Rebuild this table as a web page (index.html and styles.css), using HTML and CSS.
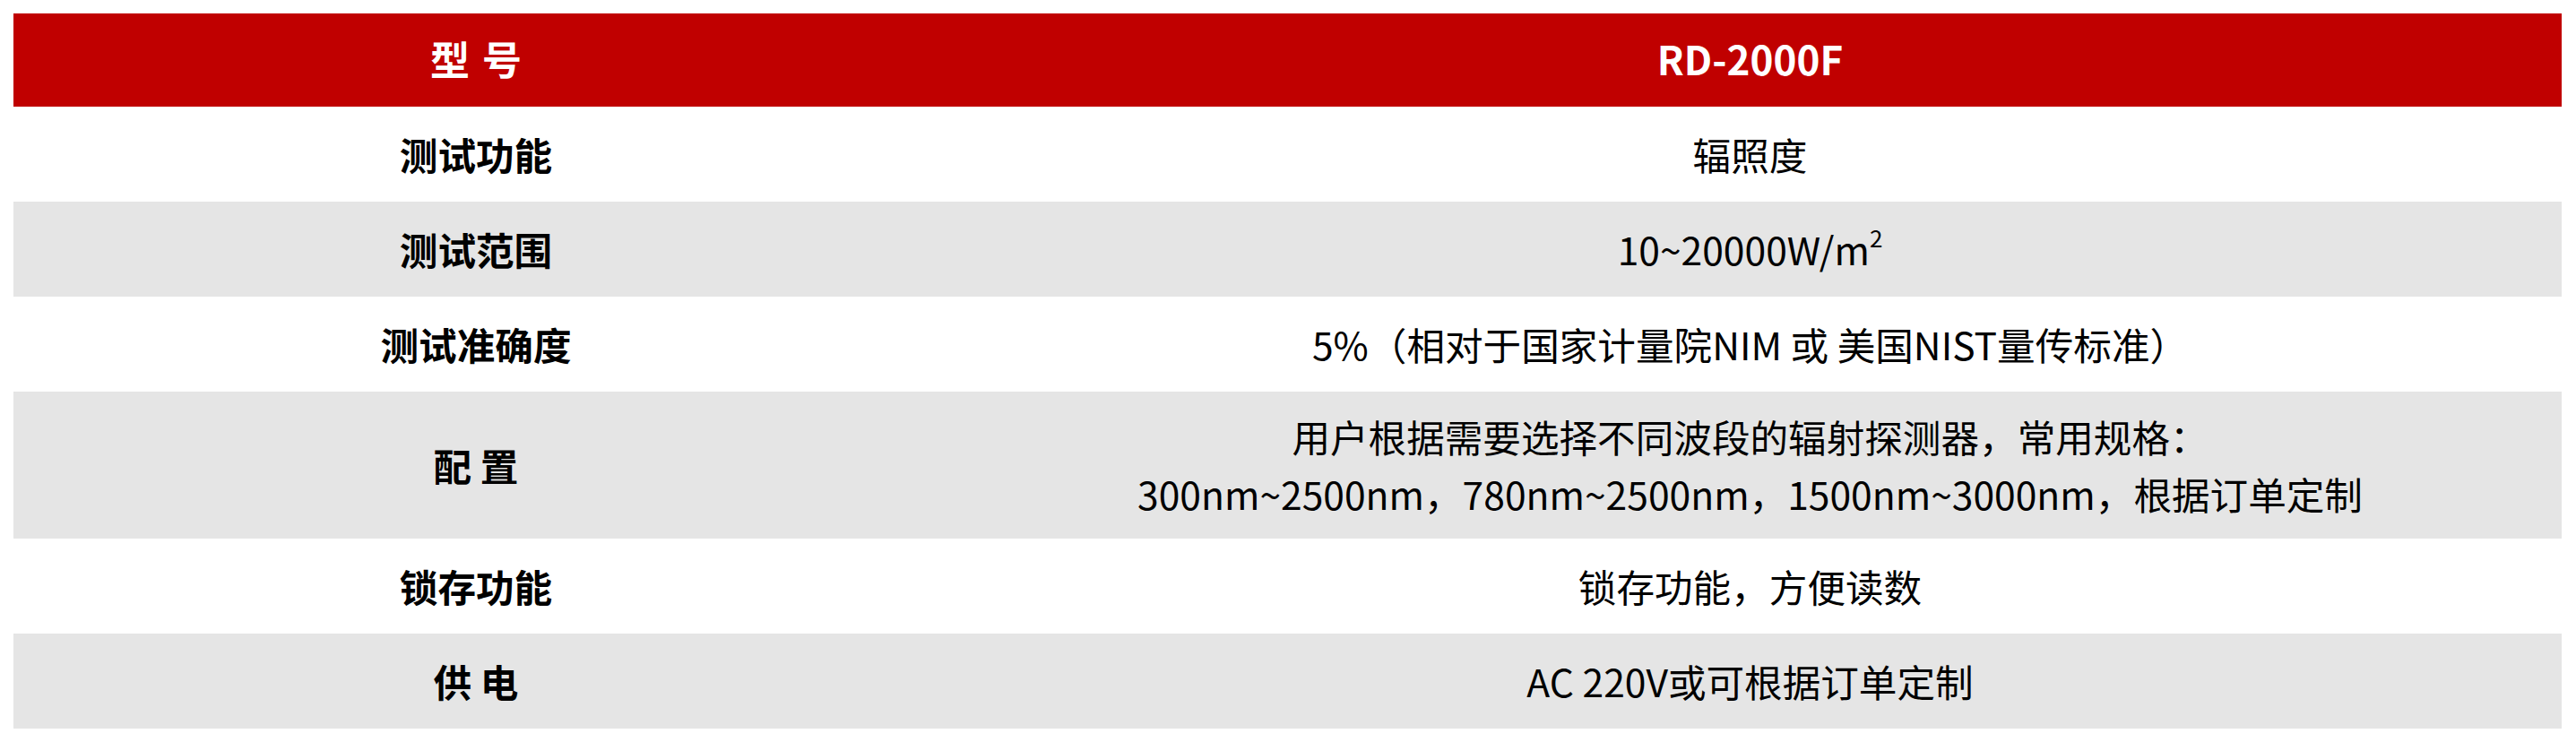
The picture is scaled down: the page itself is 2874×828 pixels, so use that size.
FILE: index.html
```html
<!DOCTYPE html>
<html lang="zh-CN">
<head>
<meta charset="utf-8">
<title>RD-2000F</title>
<link rel="stylesheet" href="styles.css">
</head>
<body>
<table class="spec">
  <colgroup>
    <col class="col-name">
    <col class="col-value">
  </colgroup>
  <thead>
    <tr class="head-row">
      <th>型 号</th>
      <th>RD-2000F</th>
    </tr>
  </thead>
  <tbody>
    <tr class="row">
      <td class="name">测试功能</td>
      <td class="value">辐照度</td>
    </tr>
    <tr class="row alt">
      <td class="name">测试范围</td>
      <td class="value">10~20000W/m<sup>2</sup></td>
    </tr>
    <tr class="row">
      <td class="name">测试准确度</td>
      <td class="value">5%（相对于国家计量院NIM 或 美国NIST量传标准）</td>
    </tr>
    <tr class="row alt">
      <td class="name">配 置</td>
      <td class="value">用户根据需要选择不同波段的辐射探测器，常用规格：<br>300nm~2500nm，780nm~2500nm，1500nm~3000nm，根据订单定制</td>
    </tr>
    <tr class="row">
      <td class="name">锁存功能</td>
      <td class="value">锁存功能，方便读数</td>
    </tr>
    <tr class="row alt">
      <td class="name">供 电</td>
      <td class="value">AC 220V或可根据订单定制</td>
    </tr>
  </tbody>
</table>
</body>
</html>
```

FILE: styles.css
```css
html, body {
  margin: 0;
  padding: 0;
  background: #ffffff;
}

body {
  font-family: "Noto Sans CJK SC", "Noto Sans", sans-serif;
  color: #000000;
}

.spec {
  margin: 15px 0 0 15px;
  width: 2843px;
  border-collapse: collapse;
  border-spacing: 0;
  table-layout: fixed;
}

.col-name {
  width: 1032px;
}

.spec th,
.spec td {
  padding: 18px 10px;
  text-align: center;
  vertical-align: middle;
  font-size: 42.6px;
  line-height: 64px;
  white-space: nowrap;
}

.head-row {
  height: 104px;
  background: #c00000;
}

.head-row th {
  color: #ffffff;
  font-weight: 700;
  font-size: 44px;
  padding-bottom: 22px;
  word-spacing: 4px;
}

.row {
  height: 106px;
  background: #ffffff;
}

.row.alt {
  background: #e5e5e5;
}

.name {
  font-weight: 700;
}

.value {
  font-weight: 400;
}

.value sup {
  font-size: 26px;
  line-height: 0;
  vertical-align: 20px;
}
```
